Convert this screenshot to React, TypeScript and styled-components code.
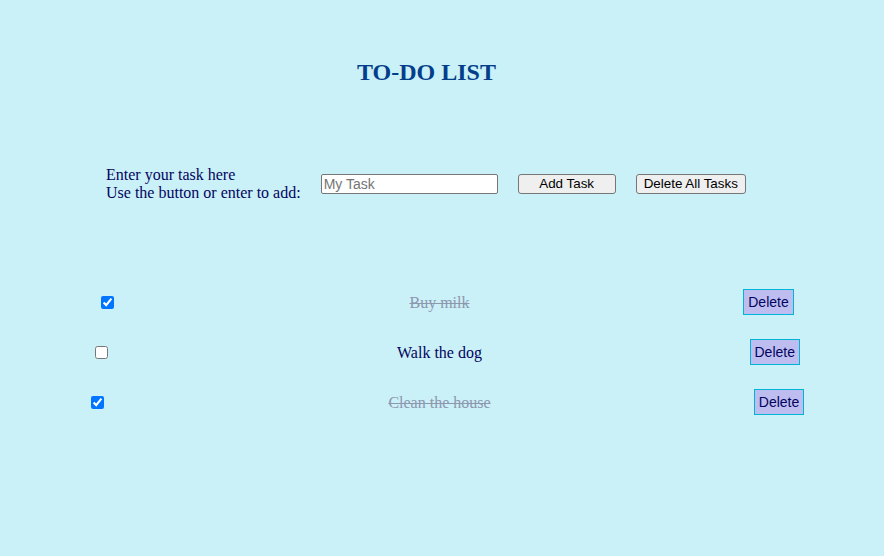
import React, { useState } from "react";
import styled, { createGlobalStyle } from "styled-components";

const GlobalStyle = createGlobalStyle`
  html, body {
    margin: 0;
    padding: 0;
    background: #caf0f8;
  }
  body {
    font-family: "Liberation Serif", "Times New Roman", serif;
    color: #03045e;
  }
`;

const Page = styled.div`
  width: 884px;
  height: 556px;
  background: #caf0f8;
  display: flex;
  flex-direction: column;
  overflow: hidden;
`;

const Title = styled.h2`
  margin: 58px 0 0;
  padding-right: 31px;
  text-align: center;
  font-family: "Liberation Serif", "Times New Roman", serif;
  font-size: 24px;
  font-weight: bold;
  color: #023e8a;
  line-height: 28px;
`;

const FormRow = styled.div`
  display: flex;
  align-items: center;
  gap: 20px;
  margin-top: 80px;
  padding-left: 106px;
`;

const Label = styled.label`
  font-size: 16px;
  line-height: 18px;
  color: #03045e;
`;

const TaskInput = styled.input`
  box-sizing: border-box;
  width: 177px;
  height: 20px;
  margin: 0;
  padding: 1px 2px;
  border: 1px solid #767676;
  border-radius: 2px;
  background: #ffffff;
  font-family: "Liberation Sans", Arial, sans-serif;
  font-size: 14px;
  color: #000;
  &::placeholder {
    color: #757575;
  }
`;

const GreyButton = styled.button<{ $w?: number }>`
  box-sizing: border-box;
  ${(p) => (p.$w ? `width: ${p.$w}px;` : "")}
  height: 20px;
  padding: 0 7px;
  border: 1px solid #767676;
  border-radius: 3px;
  background: #efefef;
  font-family: "Liberation Sans", Arial, sans-serif;
  font-size: 13.4px;
  color: #000;
  line-height: 16px;
`;

const List = styled.ul`
  list-style: none;
  margin: 75px 0 0 61px;
  padding: 0;
  width: 757px;
`;

const Row = styled.li`
  display: flex;
  align-items: center;
  justify-content: space-evenly;
  height: 50px;
`;

const CheckCell = styled.div`
  width: 300px;
  display: flex;
  align-items: center;
`;

const Check = styled.input`
  width: 13px;
  height: 13px;
  margin: 0 0 0 16px;
`;

const TaskText = styled.span<{ $done: boolean }>`
  font-size: 16px;
  white-space: nowrap;
  padding-top: 2px;
  color: ${(p) => (p.$done ? "#8d97ae" : "#03045e")};
  text-decoration: ${(p) => (p.$done ? "line-through" : "none")};
`;

const ButtonCell = styled.div`
  width: 300px;
  display: flex;
  justify-content: flex-end;
  align-items: center;
`;

const DeleteButton = styled.button`
  box-sizing: border-box;
  height: 26px;
  padding: 0 4px;
  border: 1px solid #00b4d8;
  background: #bdbdf0;
  font-family: "Liberation Sans", Arial, sans-serif;
  font-size: 14px;
  color: #03045e;
`;

type Task = { id: number; text: string; done: boolean };

export default function App() {
  const [tasks, setTasks] = useState<Task[]>([
    { id: 1, text: "Buy milk", done: true },
    { id: 2, text: "Walk the dog", done: false },
    { id: 3, text: "Clean the house", done: true },
  ]);
  const [value, setValue] = useState("");

  const add = () => {
    if (!value.trim()) return;
    setTasks((t) => [...t, { id: Date.now(), text: value.trim(), done: false }]);
    setValue("");
  };

  return (
    <Page>
      <GlobalStyle />
      <Title>TO-DO LIST</Title>
      <FormRow>
        <Label htmlFor="task">
          Enter your task here
          <br />
          Use the button or enter to add:
        </Label>
        <TaskInput
          id="task"
          placeholder="My Task"
          value={value}
          onChange={(e) => setValue(e.target.value)}
          onKeyDown={(e) => e.key === "Enter" && add()}
        />
        <GreyButton $w={98} onClick={add}>
          Add Task
        </GreyButton>
        <GreyButton onClick={() => setTasks([])}>Delete All Tasks</GreyButton>
      </FormRow>
      <List>
        {tasks.map((t) => (
          <Row key={t.id}>
            <CheckCell>
              <Check
                type="checkbox"
                checked={t.done}
                onChange={() =>
                  setTasks((all) =>
                    all.map((x) => (x.id === t.id ? { ...x, done: !x.done } : x))
                  )
                }
              />
            </CheckCell>
            <TaskText $done={t.done}>{t.text}</TaskText>
            <ButtonCell>
              <DeleteButton
                onClick={() => setTasks((all) => all.filter((x) => x.id !== t.id))}
              >
                Delete
              </DeleteButton>
            </ButtonCell>
          </Row>
        ))}
      </List>
    </Page>
  );
}
